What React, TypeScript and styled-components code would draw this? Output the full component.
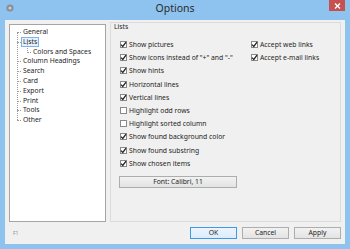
import React from "react";
import styled, { createGlobalStyle } from "styled-components";

const GlobalStyle = createGlobalStyle`
  html, body {
    margin: 0;
    padding: 0;
    background: #8ec3ef;
  }
  body {
    font-family: "Noto Sans", "Open Sans", sans-serif;
    color: #1e1e1e;
  }
`;

type TreeNode = { label: string; selected?: boolean; children?: TreeNode[] };

const tree: TreeNode[] = [
  { label: "General" },
  { label: "Lists", selected: true, children: [{ label: "Colors and Spaces" }] },
  { label: "Column Headings" },
  { label: "Search" },
  { label: "Card" },
  { label: "Export" },
  { label: "Print" },
  { label: "Tools" },
  { label: "Other" },
];

const leftOptions: { label: string; checked: boolean }[] = [
  { label: "Show pictures", checked: true },
  { label: 'Show icons instead of "+" and "-"', checked: true },
  { label: "Show hints", checked: true },
  { label: "Horizontal lines", checked: true },
  { label: "Vertical lines", checked: true },
  { label: "Highlight odd rows", checked: false },
  { label: "Highlight sorted column", checked: false },
  { label: "Show found background color", checked: true },
  { label: "Show found substring", checked: true },
  { label: "Show chosen items", checked: true },
];

const rightOptions = [
  { label: "Accept web links", checked: true },
  { label: "Accept e-mail links", checked: true },
];

const TreeList = ({ nodes, nested }: { nodes: TreeNode[]; nested?: boolean }) => (
  <Branch $nested={nested}>
    {nodes.map((n) => (
      <li key={n.label}>
        <Node $selected={n.selected}>{n.label}</Node>
        {n.children && <TreeList nodes={n.children} nested />}
      </li>
    ))}
  </Branch>
);

const CheckItem = ({ label, checked }: { label: string; checked: boolean }) => (
  <CheckRow>
    <Box>
      {checked && (
        <svg width="7" height="7" viewBox="0 0 7 7">
          <path d="M1 3.6 L2.8 5.4 L6 1.2" fill="none" stroke="#222" strokeWidth="1.3" />
        </svg>
      )}
    </Box>
    <span>{label}</span>
  </CheckRow>
);

export default function App() {
  return (
    <>
      <GlobalStyle />
      <Window>
        <TitleBar>
          <AppIcon>
            <svg width="8" height="8" viewBox="0 0 8 8">
              <circle cx="4" cy="4" r="3.6" fill="#8a8f96" />
              <circle cx="4" cy="4" r="1.6" fill="#c9ccd0" />
            </svg>
          </AppIcon>
          <Title>Options</Title>
          <CloseButton>
            <svg width="7" height="6" viewBox="0 0 7 6">
              <path d="M1 0.5 L6 5.5 M6 0.5 L1 5.5" stroke="#fff" strokeWidth="1.4" />
            </svg>
          </CloseButton>
        </TitleBar>
        <Client>
          <Main>
            <Tree>
              <TreeList nodes={tree} />
            </Tree>
            <Panel>
              <Caption>Lists</Caption>
              <Columns>
                <LeftCol>
                  {leftOptions.map((o) => (
                    <CheckItem key={o.label} {...o} />
                  ))}
                  <FontButton>Font: Calibri, 11</FontButton>
                </LeftCol>
                <RightCol>
                  {rightOptions.map((o) => (
                    <CheckItem key={o.label} {...o} />
                  ))}
                </RightCol>
              </Columns>
            </Panel>
          </Main>
          <Footer>
            <Hint>F1</Hint>
            <Buttons>
              <DialogButton $default>OK</DialogButton>
              <DialogButton>Cancel</DialogButton>
              <DialogButton>Apply</DialogButton>
            </Buttons>
          </Footer>
        </Client>
      </Window>
    </>
  );
}

const Window = styled.div`
  width: 350px;
  height: 249px;
  background: #8ec3ef;
  display: flex;
  flex-direction: column;
  box-sizing: border-box;
`;

const TitleBar = styled.div`
  height: 20px;
  display: grid;
  grid-template-columns: 1fr auto 1fr;
  align-items: start;
`;

const AppIcon = styled.div`
  padding: 4px 0 0 6px;
  line-height: 0;
`;

const Title = styled.div`
  font-size: 10.5px;
  line-height: 16px;
  color: #2b2b2b;
`;

const CloseButton = styled.div`
  justify-self: end;
  margin-right: 5px;
  width: 16px;
  height: 11px;
  background: #c75050;
  display: flex;
  align-items: center;
  justify-content: center;
`;

const Client = styled.div`
  flex: 1;
  margin: 0 5px 5px;
  background: #f0f0f0;
  display: flex;
  flex-direction: column;
  padding: 2px 4px 5px 4px;
  box-sizing: border-box;
`;

const Main = styled.div`
  display: flex;
  gap: 4px;
  height: 200px;
`;

const Tree = styled.div`
  width: 97px;
  margin-top: 2px;
  background: #fff;
  border: 1px solid #a5a5a5;
  box-sizing: border-box;
  padding: 2px 0 0 7px;
`;

const Branch = styled.ul<{ $nested?: boolean }>`
  list-style: none;
  margin: 0;
  padding: 0 0 0 ${(p) => (p.$nested ? 10 : 0)}px;
  position: relative;
  font-size: 6.8px;

  &::before {
    content: "";
    position: absolute;
    left: ${(p) => (p.$nested ? 10 : 0)}px;
    top: ${(p) => (p.$nested ? -3 : 5)}px;
    bottom: 5px;
    border-left: 1px dotted #9a9a9a;
  }

  li {
    position: relative;
  }
`;

const Node = styled.div<{ $selected?: boolean }>`
  position: relative;
  height: 9.8px;
  margin-left: 4px;
  display: inline-block;
  padding: 0 1px;
  white-space: nowrap;
  box-sizing: border-box;
  border: 1px solid ${(p) => (p.$selected ? "#7eb4ea" : "transparent")};
  background: ${(p) => (p.$selected ? "#e5f1fb" : "transparent")};
  line-height: 7.8px;

  &::before {
    content: "";
    position: absolute;
    left: -5px;
    top: 4px;
    width: 4px;
    border-top: 1px dotted #9a9a9a;
  }
`;

const Panel = styled.div`
  flex: 1;
  border: 1px solid #dcdcdc;
  box-sizing: border-box;
  display: flex;
  flex-direction: column;
  padding: 0 0 0 9px;
`;

const Caption = styled.div`
  font-size: 6.8px;
  line-height: 8px;
  margin-left: -6px;
`;

const Columns = styled.div`
  display: flex;
  margin-top: 7px;
`;

const LeftCol = styled.div`
  width: 131px;
  display: flex;
  flex-direction: column;
`;

const RightCol = styled.div`
  display: flex;
  flex-direction: column;
`;

const CheckRow = styled.div`
  height: 13.2px;
  display: flex;
  align-items: center;
  gap: 2px;
  font-size: 6.8px;
  white-space: nowrap;
`;

const Box = styled.span`
  width: 7px;
  height: 7px;
  border: 1px solid #8a8a8a;
  background: #fff;
  box-sizing: border-box;
  display: flex;
  align-items: center;
  justify-content: center;
  overflow: visible;

  svg {
    flex: none;
  }
`;

const FontButton = styled.div`
  margin: 6px 0 0 -1px;
  width: 118px;
  height: 12px;
  box-sizing: border-box;
  border: 1px solid #adadad;
  background: linear-gradient(#f2f2f2, #e3e3e3);
  font-size: 6.8px;
  line-height: 10px;
  text-align: center;
`;

const Footer = styled.div`
  margin-top: 5px;
  display: flex;
  align-items: center;
  justify-content: space-between;
`;

const Hint = styled.div`
  font-size: 5px;
  color: #8c8c8c;
  margin-left: 4px;
`;

const Buttons = styled.div`
  display: flex;
  gap: 5px;
`;

const DialogButton = styled.div<{ $default?: boolean }>`
  width: 47px;
  height: 12px;
  box-sizing: border-box;
  border: 1px solid ${(p) => (p.$default ? "#3d9ae8" : "#adadad")};
  background: ${(p) => (p.$default ? "linear-gradient(#ecf4fc, #dcecfc)" : "linear-gradient(#f2f2f2, #e3e3e3)")};
  font-size: 6.8px;
  line-height: 10px;
  text-align: center;
`;
